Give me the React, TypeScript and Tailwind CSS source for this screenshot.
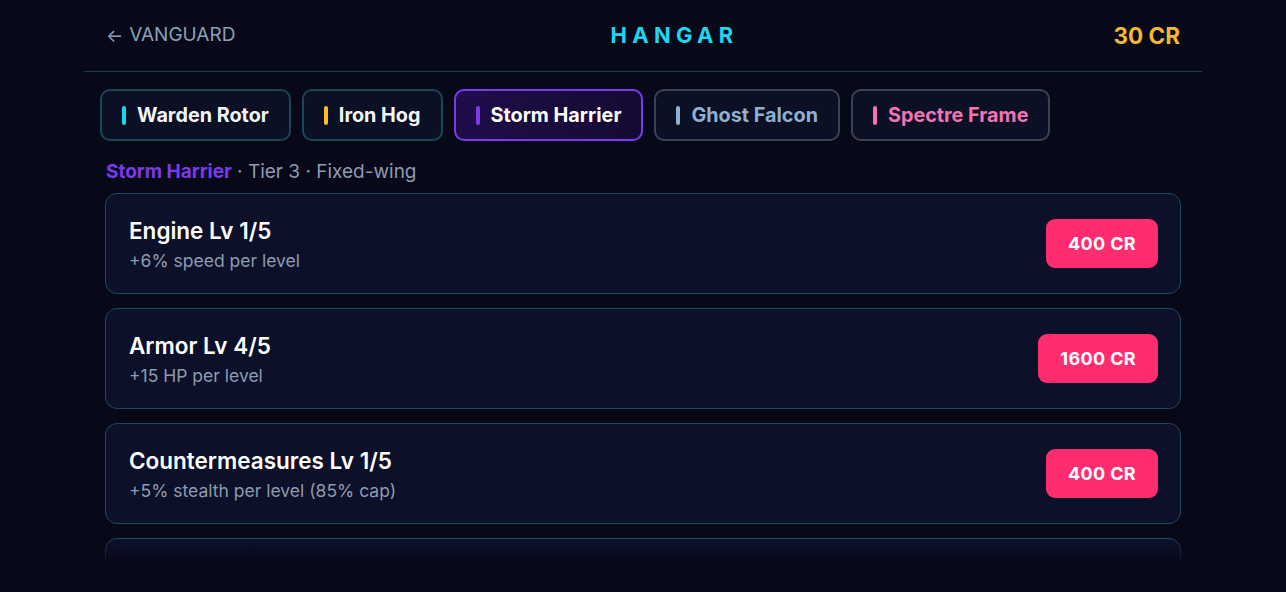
import clsx from 'clsx'

type Craft = {
  name: string
  bar: string
  text: string
  border: string
  active?: boolean
}

const crafts: Craft[] = [
  { name: 'Warden Rotor', bar: 'bg-[#22d3ee]', text: 'text-[#f1f5f9]', border: 'border-[#1b4656]' },
  { name: 'Iron Hog', bar: 'bg-[#fbbf24]', text: 'text-[#f1f5f9]', border: 'border-[#1b4656]' },
  { name: 'Storm Harrier', bar: 'bg-[#7c3aed]', text: 'text-white', border: 'border-[#7c3aed]', active: true },
  { name: 'Ghost Falcon', bar: 'bg-[#8fb0d0]', text: 'text-[#8fb0d0]', border: 'border-[#384456]' },
  { name: 'Spectre Frame', bar: 'bg-[#f472b6]', text: 'text-[#f472b6]', border: 'border-[#384456]' },
]

const upgrades = [
  { title: 'Engine Lv 1/5', desc: '+6% speed per level', cost: '400 CR' },
  { title: 'Armor Lv 4/5', desc: '+15 HP per level', cost: '1600 CR' },
  { title: 'Countermeasures Lv 1/5', desc: '+5% stealth per level (85% cap)', cost: '400 CR' },
  { title: 'Payload Lv 2/5', desc: '+10% damage per level', cost: '800 CR' },
]

export default function App() {
  return (
    <div className="h-screen bg-[#070918] font-['Inter',sans-serif] overflow-hidden">
      <div className="mx-auto flex h-full w-[1118px] flex-col pb-[28px]">
        {/* Top bar */}
        <header className="flex h-[72px] shrink-0 items-center justify-between border-b border-[#1c3c4e] px-[22px]">
          <button className="flex items-center gap-[6px] text-[19px] text-[#8aa0b6]">
            <span className="text-[18px] leading-none">←</span>
            VANGUARD
          </button>
          <h1 className="text-[22px] font-bold tracking-[0.24em] text-[#1ed6f0]">HANGAR</h1>
          <span className="text-[22.5px] font-bold text-[#f5b731]">30 CR</span>
        </header>

        {/* Craft tabs */}
        <div className="flex gap-[11px] px-[16px] pt-[17px]">
          {crafts.map((c) => (
            <button
              key={c.name}
              className={clsx(
                'flex h-[52px] items-center gap-[11px] rounded-[10px] border-2 px-[20px]',
                c.border,
                c.active ? 'bg-gradient-to-r from-[#1f0d4a] to-[#150a33]' : 'bg-[#0b1024]'
              )}
            >
              <span className={clsx('h-[19px] w-[4px] rounded-full', c.bar)} />
              <span className={clsx('pt-[2px] text-[19.8px] font-bold', c.text)}>{c.name}</span>
            </button>
          ))}
        </div>

        <p className="px-[22px] pt-[18px] text-[19px] leading-[26px] text-[#8d9bb0]">
          <span className="font-bold text-[#7c3aed]">Storm Harrier</span> · Tier 3 · Fixed-wing
        </p>

        {/* Upgrade list */}
        <div className="relative mt-[8px] min-h-0 flex-1 overflow-hidden px-[21px]">
          <div className="flex flex-col gap-[14px]">
            {upgrades.map((u) => (
              <div
                key={u.title}
                className="flex h-[101px] shrink-0 items-center justify-between rounded-[12px] border border-[#1c4b5e] bg-[#0c1029] pl-[23px] pr-[22px]"
              >
                <div className="pt-[1px]">
                  <div className="text-[22.5px] font-semibold leading-[30px] text-white">{u.title}</div>
                  <div className="mt-[3px] text-[17.5px] leading-[24px] text-[#8d9bb0]">{u.desc}</div>
                </div>
                <button className="h-[49px] rounded-[9px] bg-[#ff2d6f] px-[22px] text-[18px] font-bold tracking-[0.02em] text-white">
                  {u.cost}
                </button>
              </div>
            ))}
          </div>
          <div className="pointer-events-none absolute inset-x-0 bottom-0 h-[24px] bg-gradient-to-b from-transparent to-[#070918]" />
        </div>
      </div>
    </div>
  )
}
